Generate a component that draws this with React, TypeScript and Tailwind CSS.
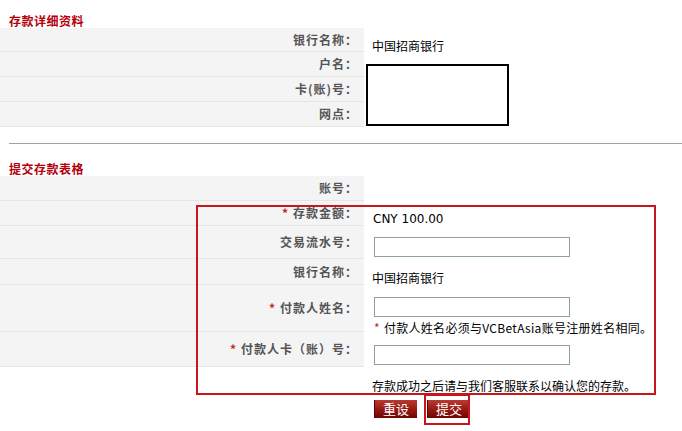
import React from 'react'

const cjk = '"SimSun", "Noto Sans CJK SC", sans-serif'

interface RowProps {
  label?: React.ReactNode
  required?: boolean
  height: string
  children?: React.ReactNode
  valueClass?: string
  plain?: boolean
}

function Row({ label, required, height, children, valueClass = '', plain = false }: RowProps) {
  return (
    <div className={`flex ${height}`}>
      <div
        className={`w-[364px] shrink-0 flex items-center justify-end pr-[6px] text-[12px] font-bold text-[#555] tracking-[1px] ${
          plain ? '' : 'bg-[#f4f4f4] border-b border-[#e6e6e6]'
        }`}
      >
        {required && <span className="text-[#c4272b] mr-[4px]">*</span>}
        {label}
      </div>
      <div className={`flex-1 pl-[8px] text-[12px] text-black ${valueClass}`}>{children}</div>
    </div>
  )
}

function TextInput() {
  return <input type="text" className="ml-[2px] block w-[196px] h-[20px] border border-[#8fa0a0] bg-white outline-none" />
}

function RedButton({ text }: { text: string }) {
  return (
    <button className="h-[18px] px-[8px] bg-gradient-to-b from-[#b83a30] via-[#9a1a14] to-[#6e0603] text-white text-[13px] leading-[18px] border-l border-[#5a0000]">
      {text}
    </button>
  )
}

export default function App() {
  return (
    <div className="relative w-[682px] h-[431px] bg-white overflow-hidden" style={{ fontFamily: cjk }}>
      {/* 存款详细资料 */}
      <div className="pt-[14px]">
        <div className="h-[14px] px-[9px] text-[12px] leading-[14px] font-bold text-[#b3000c] tracking-[0.5px]">存款详细资料</div>
        <div className="relative">
          <Row label="银行名称：" height="h-[24px]" valueClass="pt-[11px] leading-[14px]">
            中国招商银行
          </Row>
          <Row label="户名：" height="h-[25px]" />
          <Row label="卡(账)号：" height="h-[25px]" />
          <Row label="网点：" height="h-[25px]" />
          {/* redaction box */}
          <div className="absolute left-[366px] top-[36px] w-[143px] h-[62px] border-2 border-black bg-white" />
        </div>
      </div>

      <div className="mt-[16px] ml-[9px] h-px bg-[#a0a0a0]" />

      {/* 提交存款表格 */}
      <div className="pt-[18px]">
        <div className="h-[14px] px-[9px] text-[12px] leading-[14px] font-bold text-[#b3000c] tracking-[0.5px]">提交存款表格</div>
        <Row label="账号：" height="h-[25px]" />
        <Row label="存款金额：" required height="h-[25px]" valueClass="pt-[10px] leading-[14px]">
          <span style={{ fontFamily: '"DejaVu Sans", sans-serif' }} className="text-[12px] pl-[1px]">
            CNY 100.00
          </span>
        </Row>
        <Row label="交易流水号：" height="h-[33px]" valueClass="pt-[11px]">
          <TextInput />
        </Row>
        <Row label="银行名称：" height="h-[26px]" valueClass="pt-[12px] leading-[14px]">
          中国招商银行
        </Row>
        <Row label="付款人姓名：" required height="h-[47px]" valueClass="pt-[12px]">
          <TextInput />
          <div className="mt-[4px] leading-[14px] ml-[2px] tracking-[0.3px]">
            <span className="text-[#c4272b] mr-[4px]">*</span>付款人姓名必须与VCBetAsia账号注册姓名相同。
          </div>
        </Row>
        <Row label="付款人卡（账）号：" required height="h-[35px]" valueClass="pt-[13px]">
          <TextInput />
        </Row>
        <Row plain height="h-[28px]" valueClass="pt-[12px] leading-[14px]">
          存款成功之后请与我们客服联系以确认您的存款。
        </Row>
        <Row plain height="h-[30px]" valueClass="pt-[5px] flex gap-[10px] pl-[10px]">
          <RedButton text="重设" />
          <RedButton text="提交" />
        </Row>
      </div>

      {/* annotation boxes */}
      <div className="absolute left-[196px] top-[205px] w-[460px] h-[190px] border-2 border-[#c8161d]" />
      <div className="absolute left-[424px] top-[394px] w-[46px] h-[31px] border-2 border-[#c8161d]" />
    </div>
  )
}
